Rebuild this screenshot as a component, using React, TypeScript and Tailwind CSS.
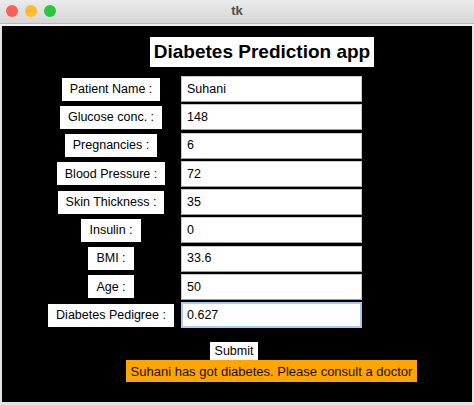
import React from "react";

const rows: [string, string][] = [
  ["Patient Name :", "Suhani"],
  ["Glucose conc. :", "148"],
  ["Pregnancies :", "6"],
  ["Blood Pressure :", "72"],
  ["Skin Thickness :", "35"],
  ["Insulin :", "0"],
  ["BMI :", "33.6"],
  ["Age :", "50"],
  ["Diabetes Pedigree :", "0.627"],
];

export default function App() {
  return (
    <div
      className="w-[474px] h-[405px] bg-[#e4e4e4] flex flex-col overflow-hidden"
      style={{ fontFamily: '"Liberation Sans", Arial, sans-serif' }}
    >
      <div className="h-[24px] bg-gradient-to-b from-[#ebebeb] to-[#d6d6d6] border-b border-[#b9b9b9] relative flex items-center">
        <div className="flex gap-[7px] ml-[6px] mb-[1px]">
          <div className="w-[12px] h-[12px] rounded-full bg-[#fe5f57]" />
          <div className="w-[12px] h-[12px] rounded-full bg-[#febc2e]" />
          <div className="w-[12px] h-[12px] rounded-full bg-[#28c840]" />
        </div>
        <div className="absolute left-0 right-0 top-0 h-[22px] flex items-center justify-center text-[13px] font-bold text-[#4d4d4d]">
          tk
        </div>
      </div>
      <div className="h-[2px] bg-[#f2f2f2]" />
      <div className="mx-[2px] h-[376px] bg-black flex flex-col text-[12.5px] text-black">
        <div className="ml-[148px] mt-[11px] w-[224px] h-[30px] bg-white flex items-center justify-center text-[19px] font-bold text-black">
          Diabetes Prediction app
        </div>
        <div className="mt-[8px] flex flex-col">
          {rows.map(([label, value], i) => (
            <div key={label} className="h-[28.25px] flex items-center">
              <div className="ml-[45px] w-[128px] flex justify-center">
                <div className="h-[23px] px-[8px] bg-white flex items-center whitespace-nowrap">
                  {label}
                </div>
              </div>
              {i === rows.length - 1 ? (
                <div className="ml-[6px] w-[181px] h-[26px] bg-white border-[2px] border-[#a9cbf2] flex items-center pl-[4px] text-black">
                  {value}
                </div>
              ) : (
                <div className="ml-[6px] w-[181px] h-[26px] bg-white border border-[#c9c9c9] border-b-[#9a9a9a] flex items-center pl-[5px] text-black">
                  {value}
                </div>
              )}
            </div>
          ))}
        </div>
        <div className="ml-[208px] mt-[13px] w-[48px] h-[18px] bg-white flex items-center justify-center text-black">
          Submit
        </div>
        <div className="ml-[124px] w-[291px] h-[22px] bg-[#ffa500] flex items-center justify-center text-[13px] text-[#1a1000] whitespace-nowrap">
          Suhani has got diabetes. Please consult a doctor
        </div>
      </div>
    </div>
  );
}
